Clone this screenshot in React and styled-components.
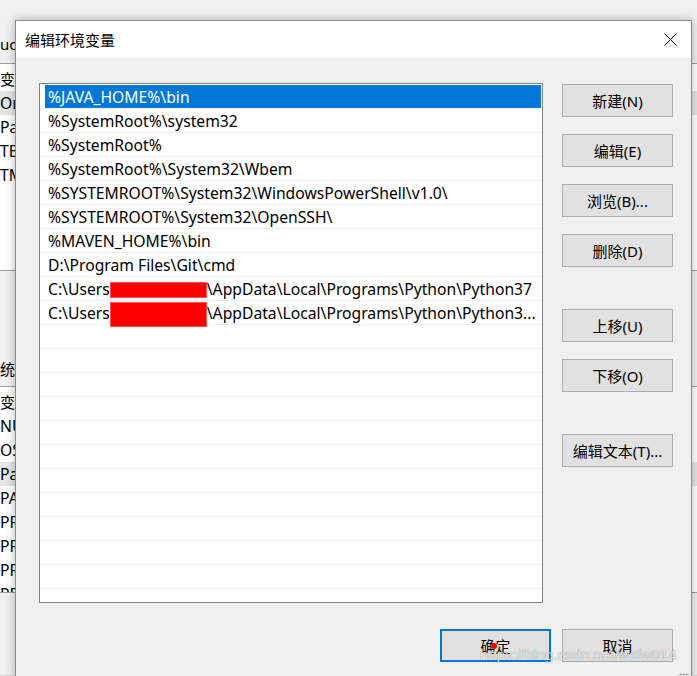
import React from 'react';
import styled, { createGlobalStyle } from 'styled-components';

const GlobalStyle = createGlobalStyle`
  html, body {
    margin: 0;
    padding: 0;
  }
  body {
    background: #f0f0f0;
    font-family: "Noto Sans", "Noto Sans CJK SC", sans-serif;
    font-size: 15px;
    color: #000;
  }
`;

const Screen = styled.div`
  position: relative;
  width: 697px;
  height: 676px;
  overflow: hidden;
  background: #f0f0f0;
`;

/* window behind the dialog */
const BackWindow = styled.div`
  position: absolute;
  inset: 0;
  display: flex;
  flex-direction: column;
  background: #f0f0f0;
  border-bottom: 1px solid #d6d6d6;
`;

const BackCaption = styled.div`
  height: ${p => p.h}px;
  display: flex;
  align-items: flex-end;
  padding-bottom: ${p => p.pb}px;
  box-sizing: border-box;
  line-height: 20px;
  white-space: nowrap;
`;

const BackList = styled.div`
  height: ${p => p.h}px;
  background: #fff;
  border-top: 1px solid #a0a0a0;
  border-bottom: 1px solid #a0a0a0;
  box-sizing: border-box;
  overflow: hidden;
`;

const BackHeader = styled.div`
  height: ${p => p.h}px;
  display: flex;
  align-items: center;
  padding-top: 2px;
  box-sizing: border-box;
  white-space: nowrap;
`;

const BackRow = styled.div`
  height: 24px;
  display: flex;
  align-items: center;
  white-space: nowrap;
  font-size: 15.7px;
  background: ${p => (p.active ? '#e5e5e5' : 'transparent')};
`;

/* the dialog */
const Dialog = styled.div`
  position: absolute;
  left: 15px;
  top: 20px;
  width: 677px;
  height: 660px;
  box-sizing: border-box;
  border: 1px solid #8a8a8a;
  background: #f0f0f0;
  box-shadow: 0 0 9px rgba(0, 0, 0, 0.28);
  display: flex;
  flex-direction: column;
`;

const TitleBar = styled.div`
  height: 37px;
  flex-shrink: 0;
  background: #fff;
  display: flex;
  align-items: center;
  justify-content: space-between;
  padding-left: 9px;
`;

const Title = styled.span`
  font-size: 15px;
  line-height: 20px;
`;

const CloseBox = styled.div`
  width: 42px;
  height: 37px;
  display: flex;
  align-items: center;
  justify-content: center;
`;

const Body = styled.div`
  flex: 1;
  padding: 25px 18px 0 23px;
  display: flex;
  flex-direction: column;
`;

const Main = styled.div`
  display: flex;
  gap: 19px;
`;

const PathList = styled.div`
  width: 504px;
  height: 520px;
  box-sizing: border-box;
  border: 1px solid #828282;
  background: #fff;
  padding-top: 1px;
  overflow: hidden;
`;

const Row = styled.div`
  height: 24px;
  box-sizing: border-box;
  border-bottom: 1px solid #ececec;
  display: flex;
  padding: 0 1px 0 5px;
`;

const Cell = styled.div`
  flex: 1;
  display: flex;
  align-items: center;
  padding-left: 3px;
  white-space: nowrap;
  font-size: 15.7px;
  line-height: 20px;
  background: ${p => (p.selected ? '#0078d7' : 'transparent')};
  color: ${p => (p.selected ? '#fff' : '#000')};
`;

const Redact = styled.span`
  display: inline-block;
  width: ${p => p.w}px;
  height: ${p => p.h}px;
  background: #ff0000;
  border: 1px solid #ff5050;
  box-sizing: border-box;
  margin-top: ${p => p.dy}px;
`;

const Side = styled.div`
  width: 111px;
  display: flex;
  flex-direction: column;
  padding-top: 1px;
`;

const Button = styled.div`
  width: 111px;
  height: 33px;
  box-sizing: border-box;
  margin-top: ${p => p.mt || 0}px;
  border: ${p => (p.primary ? '2px solid #0078d7' : '1px solid #adadad')};
  background: #e1e1e1;
  display: flex;
  align-items: center;
  justify-content: center;
  font-size: 15px;
  line-height: 20px;
  white-space: nowrap;
`;

const Footer = styled.div`
  display: flex;
  justify-content: flex-end;
  gap: 11px;
  margin-top: 26px;
`;

const Grip = styled.div`
  position: absolute;
  right: 2px;
  bottom: 0;
  width: 10px;
  height: 6px;
  background-image: radial-gradient(circle, #b4b4b4 1px, transparent 1.2px);
  background-size: 3px 3px;
`;

const CursorDot = styled.div`
  position: absolute;
  left: 491px;
  top: 643px;
  width: 6px;
  height: 6px;
  border-radius: 50%;
  background: #ff0000;
`;

const Watermark = styled.div`
  position: absolute;
  left: 480px;
  top: 645px;
  font-family: "Liberation Sans", Arial, sans-serif;
  font-size: 15px;
  line-height: 20px;
  color: rgba(255, 255, 255, 0.8);
  text-shadow: 0 0 1px rgba(0, 0, 0, 0.5);
  white-space: nowrap;
  pointer-events: none;
`;

const CloseIcon = () => (
  <svg width="13" height="13" viewBox="0 0 13 13">
    <path d="M0.5 0.5 L12.5 12.5 M12.5 0.5 L0.5 12.5" stroke="#000" strokeWidth="1" />
  </svg>
);

const paths = [
  { text: '%JAVA_HOME%\\bin', selected: true },
  { text: '%SystemRoot%\\system32' },
  { text: '%SystemRoot%' },
  { text: '%SystemRoot%\\System32\\Wbem' },
  { text: '%SYSTEMROOT%\\System32\\WindowsPowerShell\\v1.0\\' },
  { text: '%SYSTEMROOT%\\System32\\OpenSSH\\' },
  { text: '%MAVEN_HOME%\\bin' },
  { text: 'D:\\Program Files\\Git\\cmd' },
  { pre: 'C:\\Users', redact: { w: 97, h: 16, dy: 2 }, text: '\\AppData\\Local\\Programs\\Python\\Python37' },
  { pre: 'C:\\Users', redact: { w: 97, h: 25, dy: 4 }, text: '\\AppData\\Local\\Programs\\Python\\Python3...' },
];

const userVars = ['Or', 'Pa', 'TE', 'TM'];
const sysVars = ['NU', 'OS', 'Pa', 'PA', 'PR', 'PR', 'PR', 'PR'];

const sideButtons = [
  { label: '新建(N)', mt: 0 },
  { label: '编辑(E)', mt: 17 },
  { label: '浏览(B)...', mt: 17 },
  { label: '删除(D)', mt: 17 },
  { label: '上移(U)', mt: 42 },
  { label: '下移(O)', mt: 17 },
  { label: '编辑文本(T)...', mt: 42 },
];

const App = () => {
  const rows = [...paths];
  while (rows.length < 22) rows.push({ text: '' });

  return (
    <Screen>
      <GlobalStyle />
      <BackWindow>
        <BackCaption h={63} pb={9}>uc</BackCaption>
        <BackList h={208}>
          <BackHeader h={27}>变量</BackHeader>
          {userVars.map((v, i) => (
            <BackRow key={i} active={i === 0}>{v}</BackRow>
          ))}
        </BackList>
        <BackCaption h={115} pb={7}>统</BackCaption>
        <BackList h={207}>
          <BackHeader h={27}>变量</BackHeader>
          {sysVars.map((v, i) => (
            <BackRow key={i} active={i === 2}>{v}</BackRow>
          ))}
        </BackList>
      </BackWindow>

      <Dialog>
        <TitleBar>
          <Title>编辑环境变量</Title>
          <CloseBox>
            <CloseIcon />
          </CloseBox>
        </TitleBar>
        <Body>
          <Main>
            <PathList>
              {rows.map((r, i) => (
                <Row key={i}>
                  <Cell selected={r.selected}>
                    {r.pre}
                    {r.redact && <Redact w={r.redact.w} h={r.redact.h} dy={r.redact.dy} />}
                    {r.text}
                  </Cell>
                </Row>
              ))}
            </PathList>
            <Side>
              {sideButtons.map(b => (
                <Button key={b.label} mt={b.mt}>{b.label}</Button>
              ))}
            </Side>
          </Main>
          <Footer>
            <Button primary>确定</Button>
            <Button>取消</Button>
          </Footer>
        </Body>
        <Grip />
      </Dialog>

      <CursorDot />
      <Watermark>https://blog.csdn.net/wsfw014</Watermark>
    </Screen>
  );
};

export default App;
